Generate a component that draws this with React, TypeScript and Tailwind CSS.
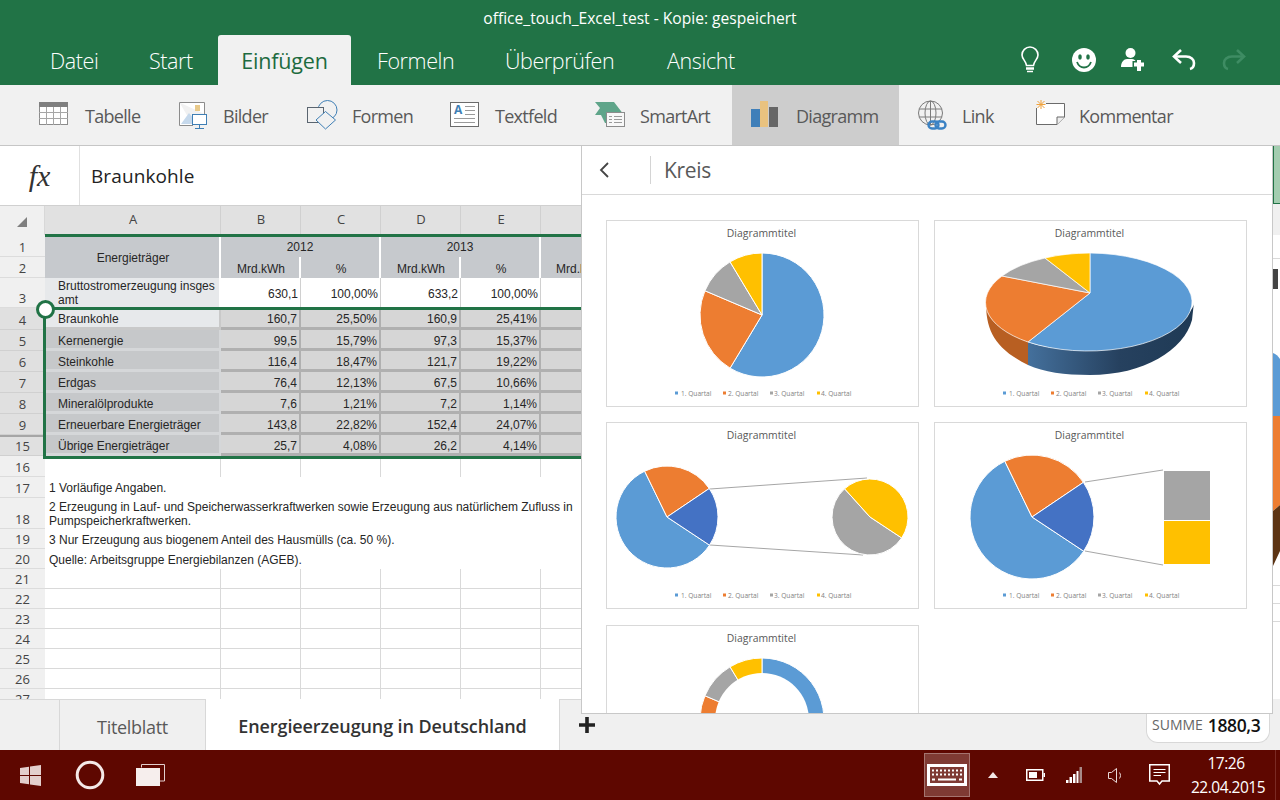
import React from 'react';

const sel = 'bg-[#d6d6d6] border-r-2 border-b-[3px] border-[#b0b0b0]';
const selLabel = 'bg-[#c6c8ca] border-r-2 border-b-[3px] border-[#d5d7d9]';

// Winkel in Grad, von oben im Uhrzeigersinn
function pt(cx: number, cy: number, r: number, a: number) {
  const t = (a * Math.PI) / 180;
  return `${(cx + r * Math.sin(t)).toFixed(2)} ${(cy - r * Math.cos(t)).toFixed(2)}`;
}

function Slice({ cx, cy, r, from, to, fill }: { cx: number; cy: number; r: number; from: number; to: number; fill: string }) {
  const large = to - from > 180 ? 1 : 0;
  return (
    <path
      d={`M${cx} ${cy}L${pt(cx, cy, r, from)}A${r} ${r} 0 ${large} 1 ${pt(cx, cy, r, to)}Z`}
      fill={fill}
      stroke="#fff"
      strokeWidth="1"
    />
  );
}

const BLUE = '#5b9bd5';
const ORANGE = '#ed7d31';
const GRAY = '#a5a5a5';
const YELLOW = '#ffc000';
const DARKBLUE = '#4472c4';

function Legend() {
  const items = [
    { x: 69, tx: 75, c: BLUE, t: '1. Quartal' },
    { x: 117, tx: 122, c: ORANGE, t: '2. Quartal' },
    { x: 164, tx: 168, c: GRAY, t: '3. Quartal' },
    { x: 211, tx: 215, c: YELLOW, t: '4. Quartal' },
  ];
  return (
    <g>
      {items.map((i) => (
        <g key={i.t}>
          <rect x={i.x} y="171.5" width="3" height="3" fill={i.c} />
          <text x={i.tx} y="175.5" fontSize="6.6" fill="#7f7f7f" fontFamily="Open Sans, sans-serif">
            {i.t}
          </text>
        </g>
      ))}
    </g>
  );
}

function ChartCard({ children, extra }: { children: React.ReactNode; extra?: string }) {
  return (
    <div className={`w-[313px] h-[187px] border border-[#d9d9d9] bg-white ${extra ?? ''}`}>
      <svg width="311" height="185" viewBox="1 1 311 185" className="block">
        <text x="155.5" y="17" textAnchor="middle" fontSize="10.4" fill="#595959" fontFamily="Open Sans, sans-serif">
          Diagrammtitel
        </text>
        {children}
      </svg>
    </div>
  );
}

function ChartCards() {
  return (
    <div className="grid grid-cols-[313px_313px] gap-x-[15px] gap-y-[15px] pl-[24px] pt-[25px]">
      <ChartCard>
        <Slice cx={156} cy={95} r={62} from={0} to={211} fill={BLUE} />
        <Slice cx={156} cy={95} r={62} from={211} to={293} fill={ORANGE} />
        <Slice cx={156} cy={95} r={62} from={293} to={329} fill={GRAY} />
        <Slice cx={156} cy={95} r={62} from={329} to={360} fill={YELLOW} />
        <Legend />
      </ChartCard>
      <ChartCard>
        <defs>
          <linearGradient id="sideBlue" x1="0" x2="1" y1="0" y2="0">
            <stop offset="0" stopColor="#44709c" />
            <stop offset="0.55" stopColor="#26415f" />
            <stop offset="1" stopColor="#1f3a55" />
          </linearGradient>
        </defs>
        <path d="M52 82 C52 110 60 128 94 145 L94 122 C70 112 52 100 52 82Z" fill="#b85f22" />
        <path d="M94 122 C120 132 190 136 225 112 C245 102 260 92 260 82 L258 100 C250 130 210 155 156 155 C130 155 110 152 94 145Z" fill="url(#sideBlue)" />
        <path d="M156 33 A104 49 0 1 1 94 122 L156 73Z" fill={BLUE} stroke="#fff" strokeWidth="0.7" />
        <path d="M94 122 A104 49 0 0 1 68 56 L156 73Z" fill={ORANGE} stroke="#fff" strokeWidth="0.7" />
        <path d="M68 56 A104 49 0 0 1 111 38 L156 73Z" fill={GRAY} stroke="#fff" strokeWidth="0.7" />
        <path d="M111 38 A104 49 0 0 1 156 33 L156 73Z" fill={YELLOW} stroke="#fff" strokeWidth="0.7" />
        <Legend />
      </ChartCard>
      <ChartCard>
        <path d="M104 67 L261 56 M104 123 L257 133" stroke="#a6a6a6" strokeWidth="1" fill="none" />
        <Slice cx={61} cy={95} r={51} from={123.5} to={334} fill={BLUE} />
        <Slice cx={61} cy={95} r={51} from={-26} to={56} fill={ORANGE} />
        <Slice cx={61} cy={95} r={51} from={56} to={123.5} fill={DARKBLUE} />
        <Slice cx={264} cy={95} r={38} from={123.5} to={318} fill={GRAY} />
        <Slice cx={264} cy={95} r={38} from={-42} to={123.5} fill={YELLOW} />
        <Legend />
      </ChartCard>
      <ChartCard>
        <path d="M151 60 L229 48 M151 129 L229 143" stroke="#a6a6a6" strokeWidth="1" fill="none" />
        <Slice cx={98} cy={95} r={62} from={123.5} to={334} fill={BLUE} />
        <Slice cx={98} cy={95} r={62} from={-26} to={56} fill={ORANGE} />
        <Slice cx={98} cy={95} r={62} from={56} to={123.5} fill={DARKBLUE} />
        <rect x="230" y="49" width="46" height="49" fill={GRAY} />
        <rect x="230" y="99" width="46" height="43" fill={YELLOW} />
        <Legend />
      </ChartCard>
      <ChartCard extra="mt-px">
        <g>
          <Slice cx={156} cy={95} r={62} from={0} to={211} fill={BLUE} />
          <Slice cx={156} cy={95} r={62} from={211} to={293} fill={ORANGE} />
          <Slice cx={156} cy={95} r={62} from={293} to={329} fill={GRAY} />
          <Slice cx={156} cy={95} r={62} from={329} to={360} fill={YELLOW} />
          <circle cx="156" cy="95" r="47" fill="#fff" />
        </g>
        <Legend />
      </ChartCard>
    </div>
  );
}

const ribbonIcons: Record<string, React.ReactNode> = {
  Tabelle: (
    <>
      <rect x="0.5" y="2.5" width="28" height="22" fill="#fff" stroke="#8c8c8c" />
      <rect x="0" y="2" width="29" height="5" fill="#7f7f7f" />
      <path d="M0 12.5H29M0 18.5H29M7.5 7V25M14.5 7V25M21.5 7V25" stroke="#a6a6a6" />
    </>
  ),
  Bilder: (
    <>
      <path d="M0.5 2.5H25.5V14M14 25.5H0.5V2.5" fill="#fff" stroke="#8c8c8c" />
      <rect x="16" y="5" width="5" height="6" fill="#e8c98a" />
      <path d="M2 24L10 13L15 19V24Z" fill="#c6d9ec" />
      <rect x="13.5" y="14.5" width="14" height="10" fill="#fff" stroke="#3f7fb5" />
      <path d="M20.5 25V28M16 28.5H25" stroke="#3f7fb5" />
    </>
  ),
  Formen: (
    <>
      <circle cx="21.5" cy="10" r="9.5" fill="none" stroke="#3f7fb5" />
      <rect x="1.5" y="7.5" width="16" height="15" fill="#f1f1f1" stroke="#5a6570" />
      <path d="M19.5 11.5L29.5 20L19.5 29L10 20Z" fill="#f1f1f1" stroke="#3f7fb5" />
    </>
  ),
  Textfeld: (
    <>
      <rect x="0.5" y="2.5" width="28" height="24" fill="#fff" stroke="#6b6b6b" />
      <text x="4" y="14" fontSize="12" fontWeight="700" fill="#3f7fb5" fontFamily="Open Sans, sans-serif">A</text>
      <path d="M15 6.5H25M15 10.5H25M15 14.5H25M4 18.5H25M4 22.5H25" stroke="#9a9a9a" />
    </>
  ),
  SmartArt: (
    <>
      <path d="M0 2H19L29 15H18V23H10L6 15H0L5 8Z" fill="#5fa58a" />
      <rect x="11.5" y="12.5" width="18" height="14" fill="#f8f8f8" stroke="#8c8c8c" />
      <path d="M14 16.5H17M19 16.5H27M14 19.5H17M19 19.5H27M14 22.5H17M19 22.5H27" stroke="#9a9a9a" />
    </>
  ),
  Diagramm: (
    <>
      <rect x="0" y="9" width="9" height="18" fill="#3f7fb9" />
      <rect x="9" y="1" width="8" height="26" fill="#e9c27f" />
      <rect x="18" y="7" width="9" height="20" fill="#666" />
    </>
  ),
  Link: (
    <>
      <circle cx="12.5" cy="13" r="12" fill="none" stroke="#7a7a7a" />
      <ellipse cx="12.5" cy="13" rx="5.5" ry="12" fill="none" stroke="#7a7a7a" />
      <path d="M1 9H24M1 17H24M12.5 1V25" stroke="#7a7a7a" fill="none" />
      <rect x="10.5" y="21.5" width="10" height="7" rx="3.5" fill="none" stroke="#3b82c4" strokeWidth="2.4" />
      <rect x="17.5" y="21.5" width="10" height="7" rx="3.5" fill="none" stroke="#3b82c4" strokeWidth="2.4" />
    </>
  ),
  Kommentar: (
    <>
      <path d="M0.5 8V24.5H21L28.5 17V3.5H10" fill="#fff" stroke="#6b6b6b" />
      <path d="M21 24.5V17H28.5" fill="#eee" stroke="#6b6b6b" />
      <path d="M5 0V9M0.5 4.5H9.5M1.5 1L8.5 8M8.5 1L1.5 8" stroke="#f0a23c" />
    </>
  ),
};

const ribbon = [
  { t: 'Tabelle', w: 'w-[140px]', ml: 'ml-[16px]' },
  { t: 'Bilder', w: 'w-[127px]', ml: 'ml-[14px]' },
  { t: 'Formen', w: 'w-[144px]', ml: 'ml-[16px]' },
  { t: 'Textfeld', w: 'w-[145px]', ml: 'ml-[15px]' },
  { t: 'SmartArt', w: 'w-[156px]', ml: 'ml-[15px]' },
  { t: 'Diagramm', w: 'w-[167px]', ml: 'ml-[15px]', active: true },
  { t: 'Link', w: 'w-[118px]', ml: 'ml-[14px]' },
  { t: 'Kommentar', w: 'w-[160px]', ml: 'ml-[13px]' },
];

function Ribbon() {
  return (
    <div className="flex h-[61px] bg-[#f1f1f1] border-b border-[#c6c6c6] pl-[20px] font-['Open_Sans',sans-serif]">
      {ribbon.map((r) => (
        <div key={r.t} className={`flex items-center h-[60px] pl-[19px] ${r.w} ${r.active ? 'bg-[#cdcdcd]' : ''}`}>
          <svg width="30" height="30" viewBox="0 0 30 30" className="shrink-0 overflow-visible">
            {ribbonIcons[r.t]}
          </svg>
          <span className={`${r.ml} pt-[2px] text-[18px] text-[#595959] tracking-[-0.7px]`}>{r.t}</span>
        </div>
      ))}
    </div>
  );
}

function TitleTabs() {
  return (
    <div className="bg-[#217346] h-[85px] text-white font-['Open_Sans',sans-serif]">
      <div className="h-[35px] pt-[8px] text-center text-[15.6px] leading-[20px]">office_touch_Excel_test - Kopie: gespeichert</div>
      <div className="flex h-[50px] text-[21.5px] font-light tracking-[-0.4px]">
        <div className="flex items-center h-[50px] pt-[2px] pl-[50px] w-[99px]">Datei</div>
        <div className="flex items-center h-[50px] pt-[2px] pl-[50px] w-[119px]">Start</div>
        <div className="flex items-center justify-center h-[50px] pt-[2px] w-[133px] bg-[#f1f1f1] rounded-t-[3px] text-[#1d6b40] font-normal tracking-[-0.2px]">Einfügen</div>
        <div className="flex items-center h-[50px] pt-[2px] pl-[26px] w-[154px]">Formeln</div>
        <div className="flex items-center h-[50px] pt-[2px] w-[162px]">Überprüfen</div>
        <div className="flex items-center h-[50px] pt-[2px] w-[356px]">Ansicht</div>
        <div className="flex items-center h-[50px] ml-[-4px]">
          <svg width="24" height="28" viewBox="0 0 24 28" fill="none" stroke="#fff" className="ml-[-1px]">
            <path d="M8.5 19.5C8 15 4 13 4 9a8 8 0 0 1 16 0c0 4-4 6-4.500 10.500Z" strokeWidth="1.6" />
            <path d="M8 22.500H16" strokeWidth="2.500" />
            <path d="M9 25.500H15" strokeWidth="1.500" />
          </svg>
          <svg width="26" height="26" viewBox="0 0 26 26" className="ml-[29px]">
            <circle cx="13" cy="13" r="12" fill="#fff" />
            <ellipse cx="9" cy="10" rx="1.800" ry="2.800" fill="#217346" />
            <ellipse cx="17" cy="10" rx="1.800" ry="2.800" fill="#217346" />
            <path d="M6 15c1.500 4 4 5.500 7 5.500s5.500-1.500 7-5.500" fill="none" stroke="#217346" strokeWidth="1.800" />
          </svg>
          <svg width="26" height="26" viewBox="0 0 26 26" className="ml-[23px]">
            <circle cx="10.500" cy="6" r="5" fill="#fff" />
            <path d="M1 20c0-5 3-8 6-8h5c2 0 3 1 3.500 2h-3v6Z" fill="#fff" />
            <path d="M14 17.500H24M19 13V24" stroke="#fff" strokeWidth="4" />
          </svg>
          <svg width="26" height="26" viewBox="0 0 26 26" fill="none" stroke="#fff" strokeWidth="2.600" className="ml-[25px]">
            <path d="M10 3L3 9.500L10 16" />
            <path d="M3.500 9.500H15c5 0 8 3 8 6.500s-2 5.500-4 6" />
          </svg>
          <svg width="26" height="26" viewBox="0 0 26 26" fill="none" stroke="#3e8c63" strokeWidth="2.600" className="ml-[24px]">
            <path d="M16 3L23 9.500L16 16" />
            <path d="M22.500 9.500H11c-5 0-8 3-8 6.500s2 5.500 4 6" />
          </svg>
        </div>
      </div>
    </div>
  );
}

function FormulaBar() {
  return (
    <div className="flex h-[60px] bg-white border-b border-[#d0d0d0]">
      <div className="flex items-center justify-center w-[80px] border-r border-[#e0e0e0] text-[30px] text-[#333] italic font-['Liberation_Serif',serif]">
        fx
      </div>
      <div className="pl-[11px] text-[19px] leading-[60px] text-[#222] tracking-[0.1px] font-['Open_Sans',sans-serif]">Braunkohle</div>
    </div>
  );
}

function RowHead({ n, on, thick }: { n: number; on?: boolean; thick?: boolean }) {
  return (
    <div
      className={`flex items-end justify-center text-[13px] leading-[18px] text-[#444] border-b overflow-hidden font-['Open_Sans',sans-serif] ${
        on ? 'bg-[#e0e0e0] border-[#d0d0d0]' : 'bg-[#f0f0f0] border-[#dcdcdc]'
      } ${thick ? 'border-t-2 border-t-[#a6a6a6]' : ''}`}
    >
      {n}
    </div>
  );
}

function ColHead({ t }: { t: string }) {
  return (
    <div className="flex items-center justify-center pb-[2px] pl-px bg-[#e1e1e1] border-r border-[#d0d0d0] text-[13px] text-[#444] font-['Open_Sans',sans-serif]">
      {t}
    </div>
  );
}

const dataRows = [
  { n: 4, l: 'Braunkohle', v: ['160,7', '25,50%', '160,9', '25,41%'] },
  { n: 5, l: 'Kernenergie', v: ['99,5', '15,79%', '97,3', '15,37%'] },
  { n: 6, l: 'Steinkohle', v: ['116,4', '18,47%', '121,7', '19,22%'] },
  { n: 7, l: 'Erdgas', v: ['76,4', '12,13%', '67,5', '10,66%'] },
  { n: 8, l: 'Mineralölprodukte', v: ['7,6', '1,21%', '7,2', '1,14%'] },
  { n: 9, l: 'Erneuerbare Energieträger', v: ['143,8', '22,82%', '152,4', '24,07%'] },
  { n: 15, l: 'Übrige Energieträger', v: ['25,7', '4,08%', '26,2', '4,14%'] },
];

const emptyCell = 'border-r border-b border-[#d9d9d9] bg-white';

function Sheet() {
  return (
    <div className="relative h-[493px] overflow-hidden bg-white text-[12px] text-[#262626] font-['Liberation_Sans',sans-serif]">
      <div className="grid grid-cols-[45px_176px_80px_80px_80px_80px_739px] grid-rows-[29px_22px_21px_30px_22px_21px_21px_21px_21px_21px_21px_21px_21px_31px_20px_20px_20px_20px_20px_20px_20px_20px_20px]">
        {/* Kopfzeile */}
        <div className="flex items-end justify-center bg-[#f0f0f0] border-r border-[#d8d8d8] pb-[7px]">
          <svg width="12" height="12" viewBox="0 0 12 12">
            <path d="M11 1V11H1Z" fill="#7f7f7f" />
          </svg>
        </div>
        {['A', 'B', 'C', 'D', 'E', ''].map((c, i) => (
          <ColHead key={i} t={c} />
        ))}

        {/* Zeile 1 + 2 */}
        <RowHead n={1} />
        <div className="row-span-2 flex items-center justify-center pt-[2px] pl-[2px] bg-[#c6c9cd] border-r-2 border-white">Energieträger</div>
        <div className="col-span-2 flex items-end justify-center pb-[1px] bg-[#c6c9cd] border-r-2 border-white">2012</div>
        <div className="col-span-2 flex items-end justify-center pb-[1px] bg-[#c6c9cd] border-r-2 border-white">2013</div>
        <div className="bg-[#c6c9cd]" />
        <RowHead n={2} />
        {['Mrd.kWh', '%', 'Mrd.kWh', '%'].map((t, i) => (
          <div key={i} className="flex items-center justify-center pt-[2px] pl-[2px] bg-[#c6c9cd] border-r-2 border-white">
            {t}
          </div>
        ))}
        <div className="flex items-center pl-[15px] pt-[2px] bg-[#c6c9cd]">Mrd.kWh</div>

        {/* Zeile 3 */}
        <RowHead n={3} />
        <div className="pl-[13px] pt-[1px] leading-[14px] bg-[#e7e9eb] border-r-2 border-white whitespace-nowrap">
          Bruttostromerzeugung insges
          <br />
          amt
        </div>
        {['630,1', '100,00%', '633,2', '100,00%'].map((t, i) => (
          <div key={i} className="flex items-center justify-end pr-[2px] pt-[1px] bg-white border-r border-[#d0d0d0]">
            {t}
          </div>
        ))}
        <div />

        {/* Auswahl */}
        {dataRows.map((r, idx) => (
          <React.Fragment key={r.n}>
            <RowHead n={r.n} on thick={r.n === 15} />
            <div className={`flex items-center pl-[13px] pt-[3px] whitespace-nowrap ${idx === 0 ? 'bg-[#e7e9eb] border-r-2 border-b-[3px] border-[#c9c9c9]' : selLabel}`}>{r.l}</div>
            {r.v.map((t, i) => (
              <div key={i} className={`flex items-center justify-end pr-[2px] pt-[3px] ${sel}`}>
                {t}
              </div>
            ))}
            <div className={sel} />
          </React.Fragment>
        ))}

        {/* Zeile 16 */}
        <RowHead n={16} />
        {[0, 1, 2, 3, 4, 5].map((i) => (
          <div key={i} className="border-r border-[#d9d9d9]" />
        ))}

        {/* Fussnoten */}
        <RowHead n={17} />
        <div className="col-span-6 flex items-center pl-[4px] pt-[1px]">1 Vorläufige Angaben.</div>
        <RowHead n={18} />
        <div className="col-span-6 pl-[4px] pt-[2px] leading-[14px]">
          2 Erzeugung in Lauf- und Speicherwasserkraftwerken sowie Erzeugung aus natürlichem Zufluss in
          <br />
          Pumpspeicherkraftwerken.
        </div>
        <RowHead n={19} />
        <div className="col-span-6 flex items-center pl-[4px] pt-[2px]">3 Nur Erzeugung aus biogenem Anteil des Hausmülls (ca. 50 %).</div>
        <RowHead n={20} />
        <div className="col-span-6 flex items-center pl-[4px] pt-[2px]">Quelle: Arbeitsgruppe Energiebilanzen (AGEB).</div>

        {/* Leere Zeilen */}
        {[21, 22, 23, 24, 25, 26].map((n) => (
          <React.Fragment key={n}>
            <RowHead n={n} />
            {[0, 1, 2, 3, 4, 5].map((i) => (
              <div key={i} className={emptyCell} />
            ))}
          </React.Fragment>
        ))}
        <RowHead n={27} />
        {[0, 1, 2, 3, 4, 5].map((i) => (
          <div key={i} className="border-r border-[#d9d9d9]" />
        ))}
      </div>

      {/* Auswahlrahmen */}
      <div className="absolute left-[45px] top-[28px] w-[540px] h-[3px] bg-[#217346]" />
      <div className="absolute left-[43px] top-[101px] w-[542px] h-[3px] bg-[#217346]" />
      <div className="absolute left-[43px] top-[103px] w-[3px] h-[150px] bg-[#217346]" />
      <div className="absolute left-[43px] top-[250px] w-[542px] h-[3px] bg-[#217346]" />
      <div className="absolute left-[36px] top-[94px] w-[19px] h-[19px] rounded-full bg-white border-[3px] border-[#217346]" />
    </div>
  );
}

function SheetTabs() {
  return (
    <div className="flex h-[51px] bg-[#f0f0f0] font-['Open_Sans',sans-serif]">
      <div className="w-[59px] border-t border-[#d8d8d8]" />
      <div className="flex items-center justify-center pt-[4px] w-[147px] border-x border-t border-[#d8d8d8] text-[18px] text-[#595959] tracking-[-0.3px]">Titelblatt</div>
      <div className="flex items-center justify-center pt-[4px] w-[353px] bg-white text-[18px] font-semibold text-[#333] tracking-[-0.1px]">
        Energieerzeugung in Deutschland
      </div>
      <div className="flex items-center pl-[18px] w-[60px] border-l border-t border-[#d8d8d8]">
        <svg width="18" height="18" viewBox="0 0 18 18">
          <path d="M9 1V17M1 9H17" stroke="#222" strokeWidth="3.600" />
        </svg>
      </div>
      <div className="ml-auto mr-[10px] flex items-end w-[124px] h-[44px] pb-[5px] pl-[5px] bg-white border border-t-0 border-[#d8d8d8] rounded-b-[12px]">
        <span className="text-[14px] text-[#666] leading-[24px]">SUMME</span>
        <span className="ml-[5px] text-[17.500px] font-semibold text-[#111] tracking-[-0.4px] leading-[24px]">1880,3</span>
      </div>
    </div>
  );
}

function Taskbar() {
  return (
    <div className="flex items-center h-[50px] bg-[#5e0700] text-white font-['Open_Sans',sans-serif]">
      <svg width="21" height="21" viewBox="0 0 21 21" className="ml-[20px]">
        <path d="M0 3L9 1.700V10H0ZM10 1.500L21 0V10H10ZM0 11H9V19.300L0 18ZM10 11H21V21L10 19.500Z" fill="#e3cfcd" />
      </svg>
      <svg width="30" height="30" viewBox="0 0 30 30" className="ml-[34px]">
        <circle cx="15" cy="15" r="12.800" fill="none" stroke="#f4e8e7" strokeWidth="3" />
      </svg>
      <svg width="29" height="22" viewBox="0 0 29 22" className="ml-[31px]">
        <path d="M5.500 3.500V0.500H28.500V17H24" fill="none" stroke="#e3cfcd" />
        <rect x="0" y="4" width="24" height="18" fill="#f6eeed" />
      </svg>

      <div className="ml-[759px] flex items-center justify-center w-[46px] h-[44px] bg-[#7f3a33] border border-[#a5746f]">
        <svg width="40" height="22" viewBox="0 0 40 22">
          <rect x="1.500" y="1.500" width="37" height="19" fill="none" stroke="#fff" strokeWidth="3" />
          <path d="M5 6.500H35M5 10.500H35" stroke="#fff" strokeWidth="2" strokeDasharray="2 2" />
          <path d="M5 15.500H8M11 15.500H29M32 15.500H35" stroke="#fff" strokeWidth="2" />
        </svg>
      </div>
      <svg width="12" height="8" viewBox="0 0 12 8" className="ml-[17px]">
        <path d="M6 1L11 7H1Z" fill="#f3e6e5" />
      </svg>
      <svg width="19" height="12" viewBox="0 0 19 12" className="ml-[27px]">
        <rect x="0.750" y="0.750" width="16" height="10.500" fill="none" stroke="#fff" strokeWidth="1.500" />
        <rect x="3" y="3" width="8" height="6" fill="#fff" />
        <rect x="17.500" y="4" width="1.500" height="4" fill="#fff" />
      </svg>
      <svg width="16" height="16" viewBox="0 0 16 16" className="ml-[21px]">
        <path d="M0 13H2.500V16H0ZM3.500 10H6V16H3.500ZM7 7H9.500V16H7ZM10.500 4H12.500V16H10.500Z" fill="#fff" />
        <path d="M13.500 0H16V16H13.500Z" fill="#a78a88" />
      </svg>
      <svg width="15" height="15" viewBox="0 0 15 15" fill="none" stroke="#e8d8d7" className="ml-[26px]">
        <path d="M0.500 4.500H3.500L8.500 0.500V14.500L3.500 10.500H0.500Z" />
        <path d="M11.500 4.500C12.800 6.500 12.800 8.500 11.500 10.500" />
      </svg>
      <svg width="21" height="22" viewBox="0 0 21 22" fill="none" stroke="#fff" className="ml-[26px]">
        <path d="M0.750 0.750H20.250V17H13L10.500 20L8 17H0.750Z" strokeWidth="1.500" />
        <path d="M4.500 5.500H16.500M4.500 8.500H16.500M4.500 11.500H12" strokeWidth="1.200" />
      </svg>
      <div className="ml-[21px] w-[70px] text-center text-[15.500px] leading-[24px] tracking-[-0.5px]">
        <div>17:26</div>
        <div>22.04.2015</div>
      </div>
      <div className="ml-[14px] w-px h-[50px] bg-[#7a2a24]" />
    </div>
  );
}

function RightSliver() {
  return (
    <div className="absolute left-[1273px] top-[146px] w-[7px] h-[553px] flex flex-col bg-white">
      <div className="h-[58px] bg-[#a3cdb0] border-l border-b border-[#217346]" />
      <div className="h-[31px] bg-[#f0f0f0]" />
      <div className="h-[24px] border-b border-[#d9d9d9]" />
      <div className="mt-[10px] w-[5px] h-[20px] bg-[#444]" />
      <svg width="7" height="228" viewBox="0 0 7 228" className="mt-[64px] shrink-0">
        <path d="M0 0C3 1 5 3 7 6V63H0Z" fill="#5b9bd5" />
        <path d="M0 63H7V152L0 158Z" fill="#ed7d31" />
        <path d="M0 158L7 152V198L0 213Z" fill="#5c3414" />
      </svg>
      <div className="mt-[-13px] h-[18px] border-b border-[#d9d9d9]" />
      <div className="h-[18px] border-b border-[#d9d9d9]" />
      <div className="h-[18px] border-b border-[#d9d9d9]" />
    </div>
  );
}

export default function App() {
  return (
    <div className="relative w-[1280px] h-[800px] overflow-hidden bg-white">
      <TitleTabs />
      <Ribbon />
      <FormulaBar />
      <Sheet />
      <SheetTabs />
      <Taskbar />
      <RightSliver />

      {/* Flyout */}
      <div className="absolute left-[581px] top-[146px] w-[692px] h-[568px] overflow-hidden bg-white border-x border-b border-[#c8c8c8] font-['Open_Sans',sans-serif]">
        <div className="flex items-center h-[49px] border-b border-[#d9d9d9]">
          <svg width="12" height="16" viewBox="0 0 12 16" fill="none" stroke="#444" strokeWidth="1.800" className="ml-[17px]">
            <path d="M9 1L2 8L9 15" />
          </svg>
          <div className="ml-[39px] w-px h-[28px] bg-[#d4d4d4]" />
          <div className="ml-[13px] pt-[2px] text-[21px] text-[#595959] tracking-[-0.3px]">Kreis</div>
        </div>
        <ChartCards />
      </div>
    </div>
  );
}
